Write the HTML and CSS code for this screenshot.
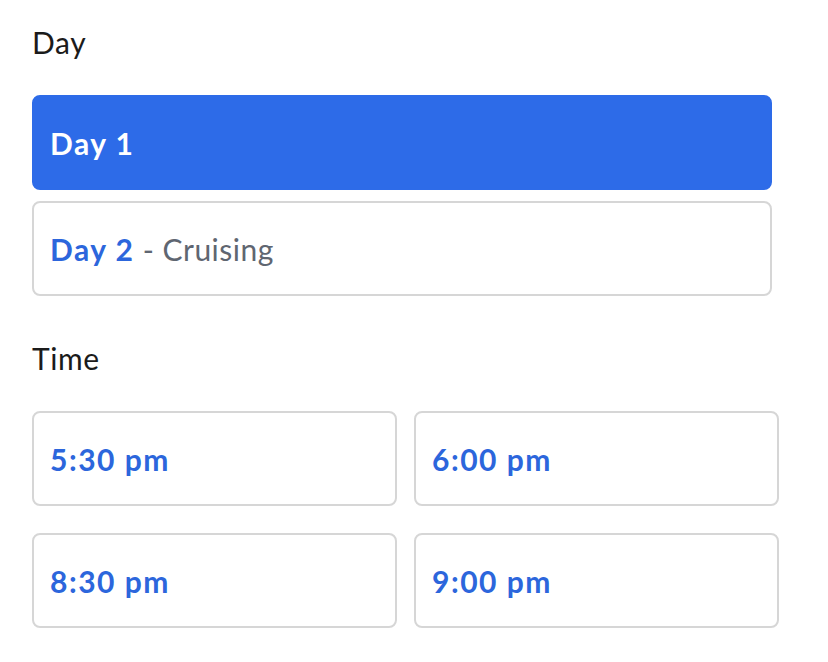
FILE: index.html
```html
<!DOCTYPE html>
<html>
<head>
<meta charset="utf-8">
<link rel="stylesheet" href="styles.css">
</head>
<body>

<div class="picker">
  <!-- Day choice -->
  <div class="section-title">Day</div>
  <div class="day-list">
    <div class="option selected"><b>Day 1</b></div>
    <div class="option"><b>Day 2</b><span class="note"> - Cruising</span></div>
  </div>

  <!-- Time choice -->
  <div class="section-title time-title">Time</div>
  <div class="time-grid">
    <div class="option"><b>5:30 pm</b></div>
    <div class="option"><b>6:00 pm</b></div>
    <div class="option"><b>8:30 pm</b></div>
    <div class="option"><b>9:00 pm</b></div>
  </div>
</div>

</body>
</html>
```

FILE: styles.css
```css
body {
  margin: 0;
  background-color: #fff;
  font-family: Lato, "Open Sans", Arial, sans-serif;
}

.picker {
  padding: 22px 0 0 32px;
}

.section-title {
  font-size: 30px;
  line-height: 40px;
  letter-spacing: 0.6px;
  color: #1b1b1b;
}

.time-title {
  margin-top: 42px;
}

.day-list {
  width: 740px;
  margin-top: 33px;
  display: flex;
  flex-direction: column;
  gap: 11px;
}

.time-grid {
  margin-top: 33px;
  display: grid;
  grid-template-columns: 365px 365px;
  column-gap: 17px;
  row-gap: 27px;
}

.option {
  height: 95px;
  box-sizing: border-box;
  display: flex;
  align-items: center;
  padding-left: 16px;
  border: 2px solid #d6d6d6;
  border-radius: 8px;
  font-size: 30px;
  color: #2c66dc;
  white-space: pre;
}

.option b {
  font-weight: 700;
  letter-spacing: 1.5px;
}

.option .note {
  color: #5f6671;
  letter-spacing: 0.5px;
}

.option.selected {
  background-color: #2d6be8;
  border-color: #2d6be8;
  color: #fff;
}
```
